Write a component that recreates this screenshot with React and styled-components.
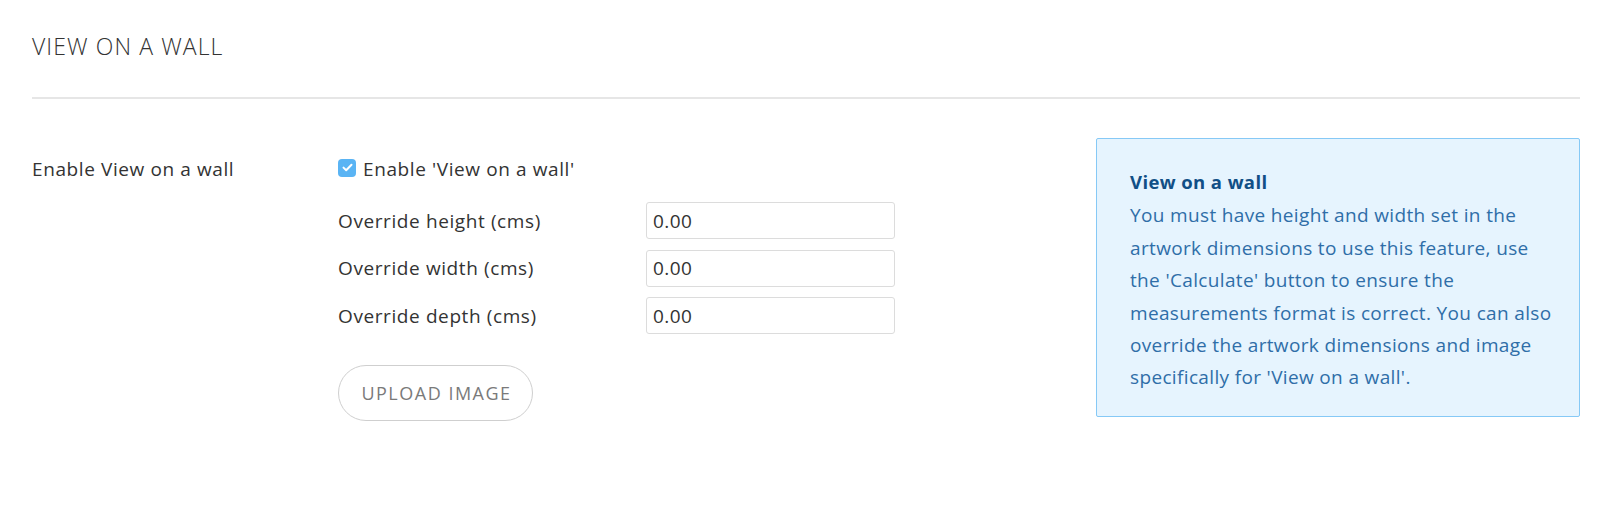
import React, { useState } from 'react';
import styled, { createGlobalStyle } from 'styled-components';

const GlobalStyle = createGlobalStyle`
  html, body {
    margin: 0;
    padding: 0;
    background: #ffffff;
  }
  body {
    font-family: 'Open Sans', 'Liberation Sans', sans-serif;
    color: #333333;
  }
  * {
    box-sizing: border-box;
  }
`;

const overrides = [
  { id: 'height', label: 'Override height (cms)' },
  { id: 'width', label: 'Override width (cms)' },
  { id: 'depth', label: 'Override depth (cms)' },
];

const App = () => {
  const [enabled, setEnabled] = useState(true);
  const [values, setValues] = useState({ height: '0.00', width: '0.00', depth: '0.00' });

  return (
    <Page>
      <GlobalStyle />
      <Header>
        <Title>VIEW ON A WALL</Title>
      </Header>
      <Divider />

      <Body>
        <SideLabel>Enable View on a wall</SideLabel>

        <Fields>
          <CheckRow onClick={() => setEnabled(!enabled)}>
            <CheckBox $checked={enabled}>
              {enabled && (
                <svg width="11" height="9" viewBox="0 0 11 9" fill="none">
                  <path d="M1.5 4.6 L4.2 7.2 L9.5 1.8" stroke="#fff" strokeWidth="2" strokeLinecap="round" strokeLinejoin="round" />
                </svg>
              )}
            </CheckBox>
            <CheckText>Enable 'View on a wall'</CheckText>
          </CheckRow>

          {overrides.map((o) => (
            <FieldRow key={o.id}>
              <FieldLabel htmlFor={o.id}>{o.label}</FieldLabel>
              <Input
                id={o.id}
                value={values[o.id]}
                onChange={(e) => setValues({ ...values, [o.id]: e.target.value })}
              />
            </FieldRow>
          ))}

          <UploadButton type="button">UPLOAD IMAGE</UploadButton>
        </Fields>

        <InfoBox>
          <InfoTitle>View on a wall</InfoTitle>
          <InfoText>
            You must have height and width set in the artwork dimensions to use this feature, use the
            'Calculate' button to ensure the measurements format is correct. You can also override the
            artwork dimensions and image specifically for 'View on a wall'.
          </InfoText>
        </InfoBox>
      </Body>
    </Page>
  );
};

export default App;

const Page = styled.div`
  width: 1600px;
  padding: 0 20px 0 32px;
`;

const Header = styled.div`
  padding-top: 31px;
  height: 97px;
`;

const Title = styled.h2`
  margin: 0;
  font-size: 23px;
  line-height: 30px;
  font-weight: 300;
  letter-spacing: 1.1px;
  color: #333333;
`;

const Divider = styled.div`
  height: 2px;
  background-color: #e6e6e6;
`;

const Body = styled.div`
  display: flex;
  align-items: flex-start;
  padding-top: 39px;
`;

const SideLabel = styled.div`
  width: 306px;
  flex-shrink: 0;
  padding-top: 19px;
  font-size: 19px;
  line-height: 24px;
  letter-spacing: 0.6px;
  color: #333333;
`;

const Fields = styled.div`
  display: flex;
  flex-direction: column;
  align-items: flex-start;
  padding-top: 19px;
  width: 560px;
`;

const CheckRow = styled.label`
  display: flex;
  align-items: center;
  gap: 7px;
  height: 24px;
  margin-bottom: 21px;
  cursor: pointer;
`;

const CheckBox = styled.span`
  display: inline-flex;
  align-items: center;
  justify-content: center;
  width: 18px;
  height: 18px;
  border-radius: 4px;
  margin-top: -3px;
  background-color: ${(props) => (props.$checked ? '#5ab4f4' : '#ffffff')};
  border: ${(props) => (props.$checked ? 'none' : '1px solid #cccccc')};
`;

const CheckText = styled.span`
  font-size: 19px;
  line-height: 24px;
  letter-spacing: 0.6px;
  color: #333333;
`;

const FieldRow = styled.div`
  display: flex;
  align-items: center;
  margin-bottom: 10.5px;
`;

const FieldLabel = styled.label`
  width: 308px;
  font-size: 19px;
  line-height: 24px;
  letter-spacing: 0.6px;
  color: #333333;
`;

const Input = styled.input`
  width: 249px;
  height: 37px;
  padding: 0 6px;
  border: 1px solid #dcdcdc;
  border-radius: 3px;
  font-family: 'Open Sans', 'Liberation Sans', sans-serif;
  font-size: 19px;
  letter-spacing: 0.4px;
  color: #333333;
  outline: none;
`;

const UploadButton = styled.button`
  margin-top: 20px;
  width: 195px;
  height: 56px;
  padding: 0 0 0 2px;
  border: 1.5px solid #cfcfcf;
  border-radius: 28px;
  background: #ffffff;
  font-family: 'Open Sans', 'Liberation Sans', sans-serif;
  font-size: 18px;
  letter-spacing: 1.5px;
  color: #7a7a7a;
  cursor: pointer;
`;

const InfoBox = styled.div`
  margin-left: auto;
  width: 484px;
  padding: 26px 22px 22px 33px;
  border: 1.5px solid #86c9f6;
  border-radius: 2px;
  background-color: #e6f4fe;
`;

const InfoTitle = styled.div`
  font-size: 18.5px;
  line-height: 34.4px;
  font-weight: 700;
  letter-spacing: 0.4px;
  color: #114f86;
`;

const InfoText = styled.p`
  margin: 0;
  font-size: 19px;
  line-height: 32.4px;
  letter-spacing: 0.35px;
  color: #2f6ea8;
`;
